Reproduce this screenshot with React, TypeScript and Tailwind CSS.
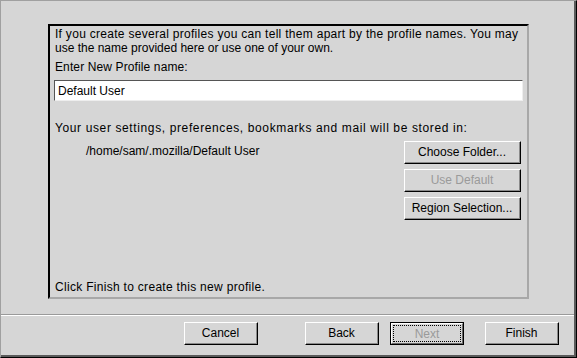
import React from "react";

function Btn({
  label,
  w,
  disabled,
  focused,
  className = "",
}: {
  label: string;
  w: string;
  disabled?: boolean;
  focused?: boolean;
  className?: string;
}) {
  return (
    <div
      className={`${w} h-[23px] shrink-0 bg-[#d6d6d6] ${
        focused
          ? "border border-black"
          : "border-t border-l border-t-white border-l-white border-r border-b border-r-[#000] border-b-[#000]"
      } ${className}`}
    >
      <div
        className={`h-full w-full flex items-center justify-center ${
          focused
            ? "border-t border-l border-t-white border-l-white border-r border-b border-r-[#6a6a6a] border-b-[#6a6a6a] p-[1px]"
            : "border-r border-b border-r-[#8a8a8a] border-b-[#8a8a8a]"
        }`}
      >
        <div
          className={`h-full w-full flex items-center justify-center text-[12px] leading-[14px] ${
            disabled ? "text-[#9a9a9a]" : "text-black"
          } ${focused ? "border border-dotted border-black" : ""}`}
        >
          {label}
        </div>
      </div>
    </div>
  );
}

export default function App() {
  return (
    <div
      className="w-[577px] h-[358px] bg-[#d6d6d6] border-t border-l border-t-[#a0a0a0] border-l-[#a0a0a0] border-r border-b border-r-black border-b-black"
      style={{ fontFamily: '"Liberation Sans", Arial, sans-serif' }}
    >
      <div className="h-full w-full border-r-2 border-b-2 border-r-[#5a5a5a] border-b-[#5a5a5a] flex flex-col">
        <div className="pt-[23px] pl-[47px]">
          <div className="w-[481px] h-[275px] border-t-2 border-l-2 border-t-black border-l-black border-r-2 border-b-2 border-r-[#a8a8a8] border-b-[#a8a8a8] flex flex-col pl-[5px] pr-[4px] pt-[1px] pb-[3px] text-[12px] leading-[14px] text-black">
            <p className="whitespace-nowrap">
              <span className="tracking-[0.29px]">
                If you create several profiles you can tell them apart by the
                profile names. You may
              </span>
              <br />
              <span>use the name provided here or use one of your own.</span>
            </p>
            <p className="mt-[5px] tracking-[0.12px]">Enter New Profile name:</p>
            <div className="mt-[6px] -ml-[1px] h-[21px] bg-white border-t border-l border-t-[#555] border-l-[#555] border-r border-b border-r-[#eee] border-b-[#eee] flex items-center pl-[3px]">
              Default User
            </div>
            <p className="mt-[20px] tracking-[0.62px] whitespace-nowrap">
              Your user settings, preferences, bookmarks and mail will be
              stored in:
            </p>
            <div className="mt-[6px] flex justify-between pr-[2px]">
              <p className="pl-[31px] pt-[3px]">
                /home/sam/.mozilla/Default User
              </p>
              <div className="flex flex-col gap-[5px]">
                <Btn label="Choose Folder..." w="w-[117px]" />
                <Btn label="Use Default" w="w-[117px]" disabled />
                <Btn label="Region Selection..." w="w-[117px]" />
              </div>
            </div>
            <p className="mt-auto tracking-[0.3px]">
              Click Finish to create this new profile.
            </p>
          </div>
        </div>
        <div className="mt-[15px] border-t border-t-[#9a9a9a] border-b border-b-white" />
        <div className="mt-[6px] flex pl-[183px]">
          <Btn label="Cancel" w="w-[74px]" />
          <Btn label="Back" w="w-[74px]" className="ml-[47px]" />
          <Btn label="Next" w="w-[74px]" className="ml-[11px]" disabled focused />
          <Btn label="Finish" w="w-[74px]" className="ml-[21px]" />
        </div>
      </div>
    </div>
  );
}
